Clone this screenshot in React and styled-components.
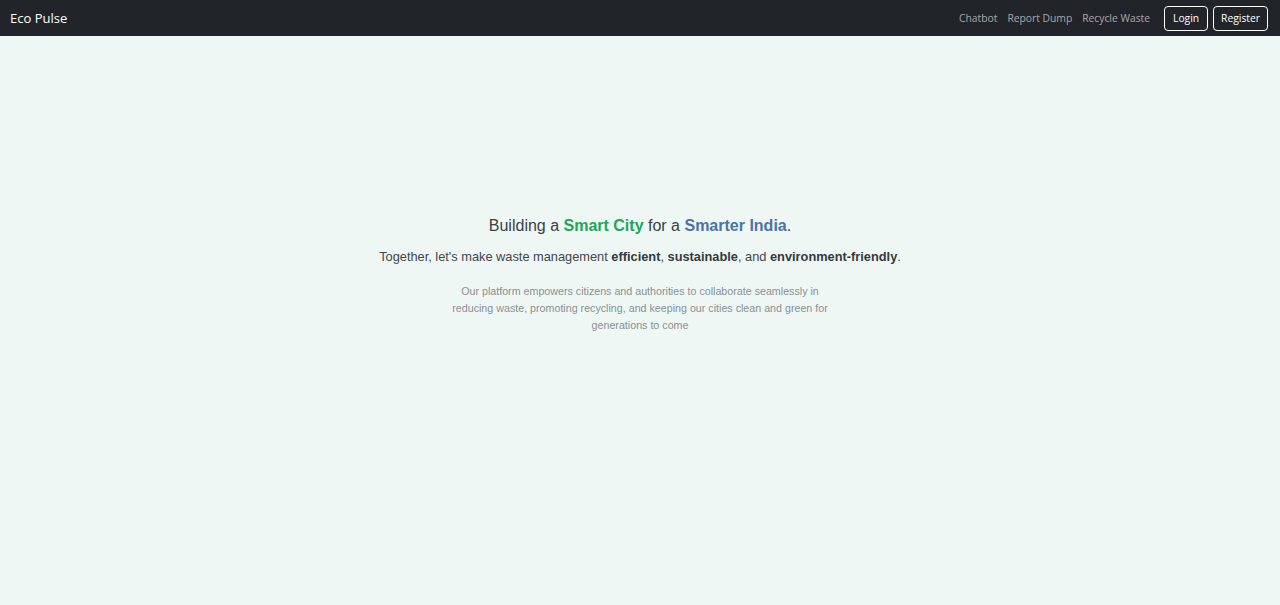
import React from "react";
import styled, { createGlobalStyle } from "styled-components";

const Global = createGlobalStyle`
  html, body { margin: 0; padding: 0; }
  body { background: #eff7f4; font-family: "Liberation Sans", Arial, sans-serif; }
`;

const Page = styled.div`
  min-height: 605px;
  display: flex;
  flex-direction: column;
`;

const Nav = styled.nav`
  height: 36px;
  background: #212529;
  display: flex;
  align-items: center;
  justify-content: space-between;
  padding: 0 12px 0 10px;
  font-family: "Open Sans", "Noto Sans", sans-serif;
`;

const Brand = styled.a`
  color: #fff;
  font-size: 13px;
  text-decoration: none;
`;

const Links = styled.div`
  display: flex;
  align-items: center;
  gap: 10px;
`;

const NavLink = styled.a`
  color: rgba(255, 255, 255, 0.6);
  font-size: 10.3px;
  text-decoration: none;
`;

const Buttons = styled.div`
  display: flex;
  gap: 5px;
  margin-left: 4px;
`;

const OutlineBtn = styled.button`
  height: 25px;
  padding: 0 ${(p) => p.$px || 7}px;
  background: transparent;
  border: 1px solid #fff;
  border-radius: 4px;
  color: #fff;
  font-family: "Open Sans", "Noto Sans", sans-serif;
  font-size: 10.3px;
`;

const Hero = styled.main`
  flex: 1;
  display: flex;
  flex-direction: column;
  align-items: center;
  padding-top: 179px;
  text-align: center;
`;

const Title = styled.h1`
  margin: 0;
  font-size: 16px;
  font-weight: 400;
  color: #3a4047;
  line-height: 21px;
`;

const Accent = styled.strong`
  color: ${(p) => p.$c};
  font-weight: 700;
`;

const Sub = styled.p`
  margin: 12px 0 0;
  font-size: 12.8px;
  color: #3f454b;
  line-height: 18px;

  b { color: #343a40; }
`;

const Desc = styled.p`
  margin: 17px 0 0;
  max-width: 388px;
  font-size: 10.7px;
  line-height: 17px;
  color: #8a9094;
`;

export default function App() {
  return (
    <Page>
      <Global />
      <Nav>
        <Brand>Eco Pulse</Brand>
        <Links>
          <NavLink>Chatbot</NavLink>
          <NavLink>Report Dump</NavLink>
          <NavLink>Recycle Waste</NavLink>
          <Buttons>
            <OutlineBtn $px={8}>Login</OutlineBtn>
            <OutlineBtn $px={7}>Register</OutlineBtn>
          </Buttons>
        </Links>
      </Nav>
      <Hero>
        <Title>
          Building a <Accent $c="#21a55a">Smart City</Accent> for a{" "}
          <Accent $c="#4a74a6">Smarter India</Accent>.
        </Title>
        <Sub>
          Together, let's make waste management <b>efficient</b>, <b>sustainable</b>, and{" "}
          <b>environment-friendly</b>.
        </Sub>
        <Desc>
          Our platform empowers citizens and authorities to collaborate seamlessly in reducing
          waste, promoting recycling, and keeping our cities clean and green for generations to
          come
        </Desc>
      </Hero>
    </Page>
  );
}
